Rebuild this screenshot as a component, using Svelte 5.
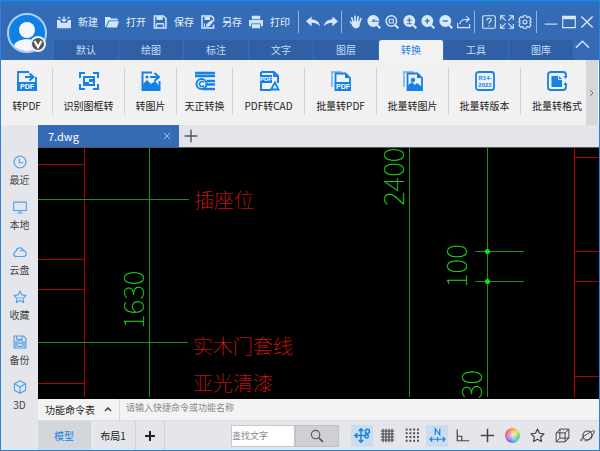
<script>
    const fileActions = [
        { icon: 'new', label: '新建' },
        { icon: 'open', label: '打开' },
        { icon: 'save', label: '保存' },
        { icon: 'saveas', label: '另存' },
        { icon: 'print', label: '打印' }
    ];

    // Icon-only groups of the title bar, separated by dividers
    const toolGroups = [
        [['undo', '撤销'], ['redo', '重做']],
        [['hand', '平移'], ['zoomback', '上一视图'], ['zoomwin', '窗口缩放'], ['zoomfit', '范围缩放'], ['zoomin', '放大'], ['zoomout', '缩小'], ['share', '分享']],
        [['help', '帮助'], ['full', '全屏'], ['gear', '设置']]
    ];

    const windowButtons = [['min', '最小化'], ['max', '最大化'], ['close', '关闭']];

    const menus = ['默认', '绘图', '标注', '文字', '图层', '转换', '工具', '图库'];
    let activeMenu = $state('转换');

    const ribbon = [
        { icon: 'topdf', label: '转PDF', size: 'narrow' },
        { icon: 'frame', label: '识别图框转', size: 'wide' },
        { icon: 'topic', label: '转图片', size: 'narrow' },
        { icon: 'tz', label: '天正转换', size: 'mid' },
        { icon: 'pdfcad', label: 'PDF转CAD', size: 'wide' },
        { icon: 'batchpdf', label: '批量转PDF', size: 'wide' },
        { icon: 'batchpic', label: '批量转图片', size: 'wide' },
        { icon: 'version', label: '批量转版本', size: 'wide' },
        { icon: 'format', label: '批量转格式', size: 'wide' }
    ];

    const places = [
        { icon: 'clock', label: '最近' },
        { icon: 'monitor', label: '本地' },
        { icon: 'cloud', label: '云盘' },
        { icon: 'star', label: '收藏' },
        { icon: 'backup', label: '备份' },
        { icon: 'cube', label: '3D' }
    ];

    const toggles = [
        ['snap', '对象捕捉'], ['grid', '栅格'], ['dots', '点阵'], ['track', '追踪'], ['ortho', '正交'],
        ['cross', '十字光标'], ['color', '颜色'], ['fav', '收藏'], ['box', '三维'], ['orbit', '动态观察']
    ];
    let enabled = $state({ snap: true, track: true });

    let command = $state('');
    let query = $state('');
</script>

{#snippet icon(name)}
    <svg class="icon" viewBox="0 0 20 20" fill="none" stroke="currentColor" stroke-width="1.6" aria-hidden="true">
        {#if name === 'new'}
            <path d="M0 7h4l2 4h8l2-4h4v12H0z" fill="currentColor" stroke="none" />
            <path d="M10 9V2M6.500 6l3.500 3 3.500-3M2 4h3M15 4h3" stroke-width="2" />
        {:else if name === 'open'}
            <path d="M0 3h7l2 2h9v3H5L1 17H0z" fill="currentColor" stroke="none" />
            <path d="M6 9h14l-3 9H2z" fill="currentColor" stroke="none" />
        {:else if name === 'save'}
            <path d="M2 1.500h13l3.500 3.500v13.500H2z" stroke-width="2.200" />
            <path d="M5 2h9v5H5z" fill="currentColor" stroke="none" />
            <path d="M5 12.500h10M5 18v-6M15 18v-6" stroke-width="1.800" />
        {:else if name === 'saveas'}
            <path d="M18 9V4l-3-2.500H1.500v17H18V14" stroke-width="2.200" />
            <path d="M5 2h8v5H5zM8 13l7-6 3 2-6 7-5 1z" fill="currentColor" stroke="none" />
            <path d="M5 12v6" />
        {:else if name === 'print'}
            <path d="M4 1h12v5H4zM0 7h20v9h-3v-4H3v4H0z" fill="currentColor" stroke="none" />
            <path d="M5 14h10v4H5z" fill="currentColor" />
        {:else if name === 'undo'}
            <path d="M0 9l8-7v4.500c7 0 11 3 12 10-3-4-6-5.500-12-5.500v5z" fill="currentColor" stroke="none" />
        {:else if name === 'redo'}
            <path d="M20 9l-8-7v4.500C5 6.500 1 9.500 0 16.500 3 12.500 6 11 12 11v5z" fill="currentColor" stroke="none" />
        {:else if name === 'hand'}
            <path d="M6 11L4 4M9 10L8.500 2M12 10l1-7.500M15 11l2-6M7 15l-5-5" stroke-width="2.400" stroke-linecap="round" />
            <path d="M5 9h11l-1 7-3 3H8l-4-4z" fill="currentColor" stroke="none" />
        {:else if name.startsWith('zoom')}
            <circle cx="9" cy="8.500" r="7.500" fill={name === 'zoomwin' ? 'none' : 'currentColor'} stroke-width="2" />
            <path d="M14 14l5 5" stroke-width="3" />
            {#if name === 'zoomin'}
                <path class="knock" d="M5.500 8.500h7M9 5v7" stroke-width="1.800" />
            {:else if name === 'zoomout'}
                <path class="knock" d="M5.500 8.500h7" stroke-width="2" />
            {:else if name === 'zoomfit'}
                <path class="knock" d="M5.500 7.500h7M9 4v7M5.500 12.500h7" />
            {:else if name === 'zoomback'}
                <path class="knock" d="M17 9H9M11 6L8 9h8" />
            {:else}
                <path d="M6 6h6v5.500H6z" />
            {/if}
        {:else if name === 'share'}
            <path d="M1 11v7h17v-5M4 13c1-6 5-7 13-7M13 2l4.500 4-4.500 4" />
        {:else if name === 'help'}
            <rect x="1" y="1" width="18" height="18" rx="2" />
            <path d="M7 8c0-5 7-4 6-.5C12.500 9.500 10 9.500 10 12.500M10 14.500v2" />
        {:else if name === 'full'}
            <path d="M1 7V1h6M1 1l7 7M13 1h6v6M19 1l-7 7M1 13v6h6M1 19l7-7M13 19h6v-6M19 19l-7-7" />
        {:else if name === 'gear'}
            <path d="M8 1h4l1 2.500 3-1 2.500 3L17 8l2 2-2 2 1.500 3-2.500 2.500-3-1-1 2.500H8l-1-2.500-3 1L1.500 15 3 12l-2-2 2-2-1.500-2.500 2.500-3 3 1z" />
            <circle cx="10" cy="10" r="2.800" />
        {:else if name === 'min'}
            <path d="M1 13h18" />
        {:else if name === 'max'}
            <path d="M1 2h18v16H1z" />
            <path d="M1 4h18" stroke-width="4" />
        {:else if name === 'close'}
            <path d="M2 2l16 16M18 2L2 18" stroke-width="2" />
        {:else if name === 'topdf'}
            <path d="M19 12V6M12 1H1v11" stroke-width="1.800" />
            <path d="M0 11h20v9H0z" fill="currentColor" stroke="none" />
            <path d="M8 6h8M12.500 2.500L16.500 6l-4 3.500" stroke-width="2" />
            <text class="tiny" x="10" y="18" text-anchor="middle">PDF</text>
        {:else if name === 'frame'}
            <path d="M1 7V2h5M14 2h5v5M19 13v5h-5M6 18H1v-5" stroke-width="2" />
            <path d="M5 6h10v8H5z" stroke-width="2" />
            <path d="M5 14v-3h5V8h5v3h-5v3z" fill="currentColor" stroke="none" />
        {:else if name === 'topic'}
            <path d="M18.500 10v9h-17V1.500H11" stroke-width="2" />
            <path d="M1 18v-4l5-5 4 4 4-3 5 6v3H1z" fill="currentColor" stroke="none" />
            <circle cx="6" cy="6" r="1.600" fill="currentColor" stroke="none" />
            <path d="M9 6h8M13.500 2L18 6l-4.500 4" stroke-width="2" />
        {:else if name === 'tz'}
            <path d="M0 2h20M0 5h20M12 10h8M12 13.500h8M8 18h12" stroke-width="2.400" />
            <circle cx="6.500" cy="13" r="5" stroke-width="2" />
            <path d="M9 11.500a2.500 2.500 0 1 0 0 3" />
        {:else if name === 'pdfcad'}
            <path d="M2 1h13l4 4v7M2 1v18h10M15 1v4h4" stroke-width="2" />
            <path d="M1 4h12v8H1z" fill="currentColor" stroke="none" />
            <path d="M12 18.500l4-7 3.500 7z" stroke-width="1.800" />
            <text class="tiny small" x="7" y="10" text-anchor="middle">PDF</text>
        {:else if name === 'batchpdf'}
            <path d="M1 16V1h10" stroke-width="1.500" opacity=".6" />
            <path d="M4.500 12V2.500h10l4.500 4.500v5" stroke-width="1.800" />
            <path d="M14 2v5h5zM3.500 11H20v9H3.500z" fill="currentColor" stroke="none" />
            <text class="tiny" x="12" y="18" text-anchor="middle">PDF</text>
        {:else if name === 'batchpic'}
            <path d="M1 16V1h10" stroke-width="1.500" opacity=".6" />
            <path d="M4.500 19V2.500h10l4.500 4.500v12z" stroke-width="1.800" />
            <path d="M4 19v-4l5-4 3 3 2-2 5 4v3zM14 2v5h5z" fill="currentColor" stroke="none" />
            <circle cx="10" cy="9" r="2.200" fill="currentColor" stroke="none" />
        {:else if name === 'version'}
            <rect x="1" y="1" width="18" height="18" rx="2.500" stroke-width="1.800" />
            <text class="tiny small blue" x="10" y="8.500" text-anchor="middle">R14-</text>
            <text class="tiny small blue" x="10" y="16" text-anchor="middle">2022</text>
        {:else if name === 'format'}
            <path d="M19 6V4q0-3-3-3H4Q1 1 1 4v12q0 3 3 3h12q3 0 3-3v-3" stroke-width="1.800" />
            <path d="M4.500 5h7.500l3 3v8H4.500zM16.500 5h4l-2 3zM16.500 14h4l-2-3z" fill="currentColor" stroke="none" />
            <path class="light" d="M11.500 4.500v4h4" stroke-width="1" />
        {:else if name === 'clock'}
            <circle cx="10" cy="10" r="8.500" />
            <path d="M9 5v6h6" />
        {:else if name === 'monitor'}
            <path d="M1 3h18v12H1zM6 18.500h8M10 15v3" />
        {:else if name === 'cloud'}
            <path d="M5 16.500c-5 0-5-6-1-7C5 3 13 2 14.500 8c6 0 5.500 8.500 0 8.500zM10 9c1-1.500 3-2 4.500-1" />
        {:else if name === 'star' || name === 'fav'}
            <path d="M10 1.500l2.600 5.500 6 .8-4.400 4.200 1.100 6L10 15l-5.300 3 1.100-6L1.400 7.800l6-.8z" stroke-linejoin="round" />
            {#if name === 'star'}
                <path d="M7.500 10.500q2.500 3 5 0" stroke-width="1.200" />
            {/if}
        {:else if name === 'backup'}
            <path d="M1.500 1.500H15l3.500 3.500v13.500h-17zM5 2v4h8V2" />
            <circle cx="10" cy="12" r="4.500" />
            <path d="M7.500 13l2-2.500 1.500 2 2-2M4 9v9M16 9v9" />
        {:else if name === 'cube'}
            <path d="M10 1l8 4.500v9L10 19l-8-4.500v-9zM2 5.500l8 4.500 8-4.500M10 10v9" stroke-linejoin="round" />
        {:else if name === 'snap'}
            <path d="M8 1v18M0 10h15M5 4l3-3 3 3M5 16l3 3 3-3M3 7l-3 3 3 3" stroke-width="2" />
            <circle cx="16.500" cy="4.500" r="2.700" stroke-width="2" />
            <circle cx="15.500" cy="11" r="2.300" stroke-width="2" />
        {:else if name === 'grid'}
            <path d="M4 1v18M8 1v18M12 1v18M16 1v18M1 4h18M1 8h18M1 12h18M1 16h18" stroke-width="1.500" />
        {:else if name === 'dots'}
            <path d="M1 2h19M1 7h19M1 12h19M1 17h19" stroke-width="2.400" stroke-dasharray="2.400 2.600" />
        {:else if name === 'track'}
            <path d="M7 9V1l6 8V1M0 15h7M13 15h7M10 12v6M7 15h6M3 12l-3 3 3 3M17 12l3 3-3 3" />
        {:else if name === 'ortho'}
            <path d="M3 2v15h16M3 11h6v6" />
        {:else if name === 'cross'}
            <path d="M10 1v18M1 10h18" stroke-width="2" />
        {:else if name === 'box'}
            <path d="M1.500 6.500h12v12h-12zM6.500 1.500h12v12h-12zM1.500 6.500l5-5M13.500 6.500l5-5M13.500 18.500l5-5M1.500 18.500l5-5" stroke-width="1.300" />
        {:else if name === 'orbit'}
            <circle cx="10" cy="10" r="6" />
            <path d="M5 14c-7 7-5 0 3-5s15-9 9 0-9 8-11 8" stroke-width="1.300" />
        {:else if name === 'search'}
            <circle cx="8" cy="8" r="6" />
            <path d="M12.500 12.500l6 6" stroke-width="2.400" />
        {:else if name === 'plus'}
            <path d="M10 0v20M0 10h20" stroke-width="4" />
        {/if}
    </svg>
{/snippet}

<div class="window">
    <header>
        <button class="avatar" aria-label="用户">
            <svg viewBox="0 0 44 44" aria-hidden="true">
                <circle cx="21" cy="21" r="19" fill="#0e80e6" stroke="#a9d0f6" stroke-width="2" />
                <circle cx="21" cy="18" r="8" fill="#f4f6f9" />
                <path d="M8 34c1-9 25-9 26 0a19 19 0 0 1-26 0z" fill="#f4f6f9" />
                <circle cx="32" cy="32" r="7" fill="#555" stroke="#e8eef5" stroke-width="2" />
                <path d="M28.500 29l3.500 6 3.500-6" fill="none" stroke="#fff" stroke-width="2.200" />
            </svg>
        </button>
        <div class="head-rows">
            <div class="titlebar">
                {#each fileActions as action}
                    <button class="file-action">{@render icon(action.icon)}{action.label}</button>
                {/each}
                {#each toolGroups as group}
                    <div class="tool-group">
                        {#each group as [name, title]}
                            <button aria-label={title}>{@render icon(name)}</button>
                        {/each}
                    </div>
                {/each}
                <div class="tool-group window-buttons">
                    {#each windowButtons as [name, title]}
                        <button aria-label={title}>{@render icon(name)}</button>
                    {/each}
                </div>
            </div>
            <nav>
                {#each menus as menu}
                    <button class:active={menu === activeMenu} onclick={() => (activeMenu = menu)}>{menu}</button>
                {/each}
                <button class="collapse" aria-label="收起功能区">
                    <svg viewBox="0 0 16 9" aria-hidden="true"><path d="M1 8l7-7 7 7" /></svg>
                </button>
            </nav>
        </div>
    </header>

    <div class="ribbon">
        <div class="ribbon-items">
            {#each ribbon as item}
                <button class={item.size}>{@render icon(item.icon)}<span>{item.label}</span></button>
            {/each}
        </div>
        <button class="more" aria-label="更多">
            <svg viewBox="0 0 6 8" aria-hidden="true"><path d="M1 1l3 3-3 3" /></svg>
        </button>
    </div>

    <div class="body">
        <aside>
            {#each places as place}
                <button>{@render icon(place.icon)}<span>{place.label}</span></button>
            {/each}
        </aside>

        <main>
            <div class="doc-tabs">
                <div class="doc">
                    <span>7.dwg</span>
                    <button aria-label="关闭 7.dwg">{@render icon('close')}</button>
                </div>
                <button class="add" aria-label="新建图纸">{@render icon('cross')}</button>
            </div>

            <div class="canvas">
                <svg role="img" aria-label="7.dwg">
                    <g class="red">
                        <path d="M46.500 0v249M0 16.500h46M0 111.500h46M0 141.500h46M0 235.500h46" />
                        <path d="M536.500 0v249M537 9.500h30M537 103.500h30M537 133.500h30M537 228.500h30" />
                    </g>
                    <g class="green">
                        <path d="M111.500 0v249M0 51.500h151M0 194.500h150M371.500 0v249M449.500 0v249M437 103.500h49M437 133.500h49" />
                        <circle cx="449.500" cy="103.500" r="2.500" />
                        <circle cx="449.500" cy="133.500" r="2.500" />
                    </g>
                    <g class="dim">
                        <text transform="translate(106 181) rotate(-90)">1630</text>
                        <text transform="translate(366 58) rotate(-90)">2400</text>
                        <text transform="translate(429 140) rotate(-90)">100</text>
                        <text transform="translate(444 251) rotate(-90)">30</text>
                    </g>
                    <g class="note">
                        <text x="156" y="60">插座位</text>
                        <text x="155" y="206">实木门套线</text>
                        <text x="155" y="243">亚光清漆</text>
                    </g>
                </svg>
            </div>

            <div class="command">
                <button>功能命令表
                    <svg viewBox="0 0 8 5" aria-hidden="true"><path d="M1 4l3-3 3 3" /></svg>
                </button>
                <input type="text" aria-label="命令" placeholder="请输入快捷命令或功能名称" bind:value={command} />
            </div>

            <footer>
                <button class="layout active">模型</button>
                <button class="layout">布局1</button>
                <button class="layout new-layout" aria-label="新建布局">{@render icon('plus')}</button>
                <div class="search">
                    <input type="text" aria-label="查找文字" placeholder="查找文字" bind:value={query} />
                    <button aria-label="查找">{@render icon('search')}</button>
                </div>
                <div class="toggles">
                    {#each toggles as [name, title]}
                        <button class:on={enabled[name]} aria-label={title} onclick={() => (enabled[name] = !enabled[name])}>
                            {#if name === 'color'}
                                <span class="wheel"></span>
                            {:else}
                                {@render icon(name)}
                            {/if}
                        </button>
                    {/each}
                </div>
            </footer>
        </main>
    </div>
</div>

<style>
    :global(body) {
        margin: 0;
    }

    .window {
        box-sizing: border-box;
        display: flex;
        flex-direction: column;
        min-height: 100vh;
        border: 1px solid #2b82d9;
        background: #e4e6eb;
        color: #222;
        font: 10px/14px "Noto Sans CJK SC", sans-serif;
        overflow: hidden;
    }

    button, input {
        box-sizing: border-box;
        margin: 0;
        padding: 0;
        border: 0;
        background: none;
        color: inherit;
        font: inherit;
    }

    button {
        display: flex;
        align-items: center;
        justify-content: center;
        cursor: pointer;
        white-space: nowrap;
    }

    svg {
        display: block;
        flex: none;
    }

    .icon {
        width: 14px;
        height: 14px;
        overflow: visible;
    }

    header {
        display: flex;
        background: linear-gradient(#1f77d2, #356bb4 6px);
        color: #d5e8fc;
    }

    .avatar {
        width: 53px;
        padding-top: 6px;
    }

    .avatar svg {
        width: 44px;
        height: 44px;
    }

    .head-rows {
        flex: 1;
        min-width: 0;
    }

    .titlebar {
        display: flex;
        align-items: center;
        height: 39px;
        padding: 2px 3px 0 3px;
        box-sizing: border-box;
    }

    .file-action {
        gap: 7px;
        margin-right: 7px;
        color: #e6f2ff;
    }

    .file-action .icon {
        color: #cde6ff;
    }

    .tool-group {
        display: flex;
        height: 22px;
        padding: 0 1px 0 5px;
        border-left: 1px solid #8db4e2;
    }

    .tool-group button {
        width: 18px;
    }

    .window-buttons {
        margin-left: 1px;
    }

    .file-action + .tool-group {
        margin-left: 1px;
    }

    .knock {
        stroke: #356bb4;
    }

    nav {
        display: flex;
        height: 20px;
    }

    nav button {
        width: 65px;
        border-right: 1px solid #3a6db3;
        background: #2f60a5;
        color: #c6ddf6;
    }

    nav button.active {
        border-radius: 3px 3px 0 0;
        background: #f2f2f2;
        color: #1c80e0;
    }

    nav .collapse {
        width: 16px;
        align-items: flex-start;
        border: 0;
        background: none;
    }

    .collapse svg {
        width: 15px;
        height: 9px;
        fill: none;
        stroke: #d5e8fc;
        stroke-width: 1.5;
    }

    .ribbon {
        display: flex;
        height: 65px;
        padding-right: 1px;
        background: #f1f1f1;
    }

    .ribbon-items {
        display: flex;
        flex: 1;
        min-width: 0;
        overflow: hidden;
    }

    .ribbon-items button {
        flex: none;
        flex-direction: column;
        justify-content: flex-start;
        gap: 8px;
        margin: 8px 0 10px;
        padding-top: 3px;
        border-right: 1px solid #d2d2d4;
    }

    .ribbon-items button:last-child {
        border: 0;
    }

    .ribbon-items .icon {
        width: 20px;
        height: 20px;
        color: #1482e6;
    }

    .narrow {
        width: 52px;
    }

    .mid {
        width: 56px;
    }

    .wide {
        width: 72px;
    }

    .tiny {
        fill: #fff;
        stroke: none;
        font: 700 7px/1 "Liberation Sans", sans-serif;
    }

    .tiny.small {
        font-size: 6px;
    }

    .tiny.blue {
        fill: #1482e6;
    }

    .light {
        stroke: #cfe5fb;
    }

    .more {
        width: 12px;
        background: #d6d7da;
    }

    .more svg {
        width: 6px;
        height: 8px;
        fill: none;
        stroke: #777;
    }

    .body {
        display: flex;
        flex: 1;
    }

    aside {
        display: flex;
        flex-direction: column;
        gap: 9px;
        width: 37px;
        padding-top: 28px;
        box-sizing: border-box;
        color: #444;
    }

    aside button {
        flex-direction: column;
        gap: 4px;
        height: 36px;
    }

    aside .icon {
        color: #4e9fe8;
    }

    main {
        display: flex;
        flex: 1;
        flex-direction: column;
        min-width: 0;
    }

    .doc-tabs {
        display: flex;
        height: 23px;
        border-bottom: 1px solid #55585e;
        box-sizing: border-box;
        background: #e3e4e9;
    }

    .doc {
        display: flex;
        align-items: center;
        justify-content: space-between;
        width: 141px;
        padding: 0 8px 0 10px;
        box-sizing: border-box;
        background: #356bb4;
        color: #fff;
        font-size: 11px;
    }

    .doc .icon {
        width: 8px;
        height: 8px;
        color: #c6ddf6;
    }

    .add {
        width: 24px;
        color: #555;
    }

    .canvas {
        position: relative;
        flex: 1;
        min-height: 250px;
        background: #000;
    }

    .canvas svg {
        position: absolute;
        width: 100%;
        height: 100%;
    }

    .red {
        fill: none;
        stroke: #b40000;
    }

    .green {
        fill: #00f000;
        stroke: #109a10;
    }

    .green circle {
        stroke: none;
    }

    .dim {
        fill: #20d020;
        font-size: 28px;
        font-weight: 100;
    }

    .note {
        fill: #ff1818;
        font-size: 20px;
        font-weight: 100;
    }

    .command {
        display: flex;
        height: 22px;
        border-bottom: 1px solid #dcdee2;
        box-sizing: border-box;
        background: #f3f3f4;
    }

    .command button {
        gap: 9px;
        width: 82px;
        border-right: 1px solid #d6d8dc;
    }

    .command svg {
        width: 8px;
        height: 5px;
        fill: none;
        stroke: #444;
        stroke-width: 1.5;
    }

    .command input {
        flex: 1;
        padding: 0 6px 4px;
        font-size: 9px;
    }

    input::placeholder {
        color: #888;
        opacity: 1;
    }

    footer {
        display: flex;
        align-items: stretch;
        height: 29px;
    }

    .layout {
        width: 45px;
        border-right: 1px solid #d0d2d7;
    }

    .layout.active {
        width: 53px;
        background: #d3d6db;
        color: #1c80e0;
    }

    .new-layout {
        width: 29px;
    }

    .new-layout .icon {
        width: 10px;
        height: 10px;
    }

    .search {
        display: flex;
        align-items: center;
        margin-left: auto;
    }

    .search input {
        width: 64px;
        height: 22px;
        border: 1px solid #c6c8cc;
        background: #fff;
        font-size: 9px;
    }

    .search button {
        width: 44px;
        height: 22px;
        border: 1px solid #bfc1c5;
        background: #cfd0d3;
        color: #555;
    }

    .toggles {
        display: flex;
        align-items: center;
        gap: 3px;
        padding: 0 1px 0 12px;
        color: #444;
    }

    .toggles button {
        width: 22px;
        height: 22px;
    }

    .toggles .icon {
        width: 15px;
        height: 15px;
    }

    .toggles .on {
        background: #cbdcee;
        color: #1482e6;
    }

    .wheel {
        width: 15px;
        height: 15px;
        border-radius: 50%;
        background: radial-gradient(#ffffffc0, #ffffff00 70%), conic-gradient(#e94, #dd5, #5c6, #4bd, #56d, #c5c, #e56, #e94);
    }
</style>
